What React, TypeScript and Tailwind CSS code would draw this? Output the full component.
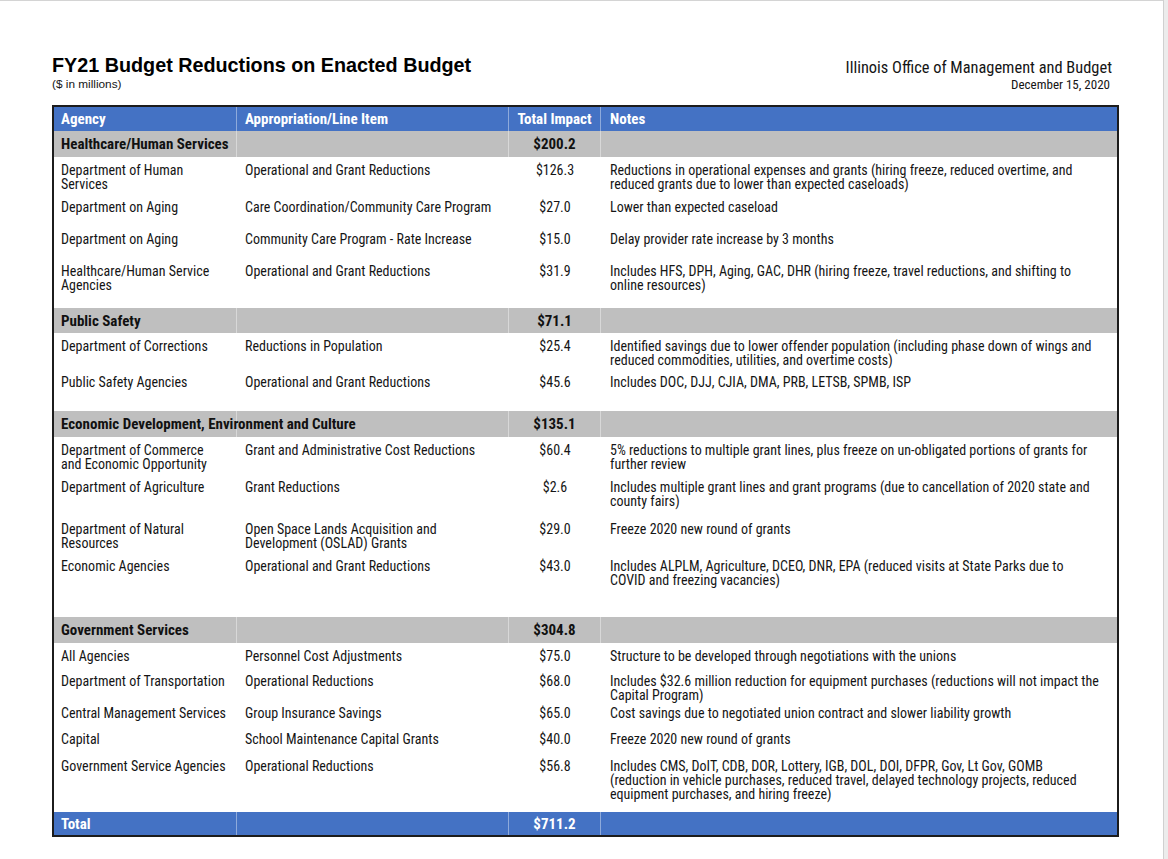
import React from "react";

type Row = {
    agency: string[];
    item: string[];
    amount: string;
    notes: string[];
    h: number;
};

type Group = {
    name: string;
    total: string;
    h: number;
    rows: Row[];
};

const groups: Group[] = [
    {
        name: "Healthcare/Human Services",
        total: "$200.2",
        h: 26,
        rows: [
            {
                agency: ["Department of Human", "Services"],
                item: ["Operational and Grant Reductions"],
                amount: "$126.3",
                notes: [
                    "Reductions in operational expenses and grants (hiring freeze, reduced overtime, and",
                    "reduced grants due to lower than expected caseloads)",
                ],
                h: 37,
            },
            {
                agency: ["Department on Aging"],
                item: ["Care Coordination/Community Care Program"],
                amount: "$27.0",
                notes: ["Lower than expected caseload"],
                h: 32,
            },
            {
                agency: ["Department on Aging"],
                item: ["Community Care Program - Rate Increase"],
                amount: "$15.0",
                notes: ["Delay provider rate increase by 3 months"],
                h: 32,
            },
            {
                agency: ["Healthcare/Human Service", "Agencies"],
                item: ["Operational and Grant Reductions"],
                amount: "$31.9",
                notes: [
                    "Includes HFS, DPH, Aging, GAC, DHR (hiring freeze, travel reductions, and shifting to",
                    "online resources)",
                ],
                h: 50,
            },
        ],
    },
    {
        name: "Public Safety",
        total: "$71.1",
        h: 25,
        rows: [
            {
                agency: ["Department of Corrections"],
                item: ["Reductions in Population"],
                amount: "$25.4",
                notes: [
                    "Identified savings due to lower offender population (including phase down of wings and",
                    "reduced commodities, utilities, and overtime costs)",
                ],
                h: 36,
            },
            {
                agency: ["Public Safety Agencies"],
                item: ["Operational and Grant Reductions"],
                amount: "$45.6",
                notes: ["Includes DOC, DJJ, CJIA, DMA, PRB, LETSB, SPMB, ISP"],
                h: 42,
            },
        ],
    },
    {
        name: "Economic Development, Environment and Culture",
        total: "$135.1",
        h: 26,
        rows: [
            {
                agency: ["Department of Commerce", "and Economic Opportunity"],
                item: ["Grant and Administrative Cost Reductions"],
                amount: "$60.4",
                notes: [
                    "5% reductions to multiple grant lines, plus freeze on un-obligated portions of grants for",
                    "further review",
                ],
                h: 37,
            },
            {
                agency: ["Department of Agriculture"],
                item: ["Grant Reductions"],
                amount: "$2.6",
                notes: [
                    "Includes multiple grant lines and grant programs (due to cancellation of 2020 state and",
                    "county fairs)",
                ],
                h: 42,
            },
            {
                agency: ["Department of Natural", "Resources"],
                item: ["Open Space Lands Acquisition and", "Development (OSLAD) Grants"],
                amount: "$29.0",
                notes: ["Freeze 2020 new round of grants"],
                h: 37,
            },
            {
                agency: ["Economic Agencies"],
                item: ["Operational and Grant Reductions"],
                amount: "$43.0",
                notes: [
                    "Includes ALPLM, Agriculture, DCEO, DNR, EPA (reduced visits at State Parks due to",
                    "COVID and freezing vacancies)",
                ],
                h: 64,
            },
        ],
    },
    {
        name: "Government Services",
        total: "$304.8",
        h: 26,
        rows: [
            {
                agency: ["All Agencies"],
                item: ["Personnel Cost Adjustments"],
                amount: "$75.0",
                notes: ["Structure to be developed through negotiations with the unions"],
                h: 25,
            },
            {
                agency: ["Department of Transportation"],
                item: ["Operational Reductions"],
                amount: "$68.0",
                notes: [
                    "Includes $32.6 million reduction for equipment purchases (reductions will not impact the",
                    "Capital Program)",
                ],
                h: 32,
            },
            {
                agency: ["Central Management Services"],
                item: ["Group Insurance Savings"],
                amount: "$65.0",
                notes: ["Cost savings due to negotiated union contract and slower liability growth"],
                h: 26,
            },
            {
                agency: ["Capital"],
                item: ["School Maintenance Capital Grants"],
                amount: "$40.0",
                notes: ["Freeze 2020 new round of grants"],
                h: 27,
            },
            {
                agency: ["Government Service Agencies"],
                item: ["Operational Reductions"],
                amount: "$56.8",
                notes: [
                    "Includes CMS, DoIT, CDB, DOR, Lottery, IGB, DOL, DOI, DFPR, Gov, Lt Gov, GOMB",
                    "(reduction in vehicle purchases, reduced travel, delayed technology projects, reduced",
                    "equipment purchases, and hiring freeze)",
                ],
                h: 59,
            },
        ],
    },
];

const cols = "grid grid-cols-[183px_272px_92px_1fr]";
const narrow = "font-['Liberation_Sans_Narrow','Roboto_Condensed',Roboto,sans-serif]";

function Lines({ lines }: { lines: string[] }) {
    return (
        <>
            {lines.map((l) => (
                <div key={l} className="whitespace-nowrap">
                    {l}
                </div>
            ))}
        </>
    );
}

function BandRow({
    cells,
    bg,
    text,
    h,
}: {
    cells: string[];
    bg: string;
    text: string;
    h: number;
}) {
    return (
        <div className={`${cols} ${bg} ${text} font-bold text-[15px] leading-[16px]`} style={{ height: h }}>
            <div className="flex items-center pl-[7px] border-r border-white/40 whitespace-nowrap">{cells[0]}</div>
            <div className="flex items-center pl-2 border-r border-white/40">{cells[1]}</div>
            <div className="flex items-center justify-center border-r border-white/40">{cells[2]}</div>
            <div className="flex items-center pl-[9px]">{cells[3]}</div>
        </div>
    );
}

export default function App() {
    return (
        <div className="flex w-[1168px] h-[859px] bg-white overflow-hidden">
            <div className="w-[1163px] border-t border-[#d4d4d4]">
                <div className={`ml-[52px] w-[1067px] text-[#151515] ${narrow}`}>
                    {/* Title block */}
                    <div className="flex justify-between items-start pt-[52px]">
                        <div>
                            <h1 className="font-['Liberation_Sans',Arial,sans-serif] font-bold text-[19.75px] leading-[24px] text-black">
                                FY21 Budget Reductions on Enacted Budget
                            </h1>
                            <div className="font-['Liberation_Sans',Arial,sans-serif] text-[11.8px] leading-[14px]">
                                ($ in millions)
                            </div>
                        </div>
                        <div className="text-right pr-[7px] pt-[6px]">
                            <div className="text-[16.4px] leading-[18px]">Illinois Office of Management and Budget</div>
                            <div className="text-[13px] leading-[15px] pr-[2px]">December 15, 2020</div>
                        </div>
                    </div>

                    {/* Table */}
                    <div className="mt-[13px] border-2 border-[#1c1c1c]">
                        <BandRow
                            cells={["Agency", "Appropriation/Line Item", "Total Impact", "Notes"]}
                            bg="bg-[#4472c4]"
                            text="text-white"
                            h={24}
                        />
                        {groups.map((g) => (
                            <div key={g.name}>
                                <BandRow cells={[g.name, "", g.total, ""]} bg="bg-[#bfbfbf]" text="text-[#111]" h={g.h} />
                                {g.rows.map((r, i) => (
                                    <div
                                        key={i}
                                        className={`${cols} text-[14px] leading-[14px] pt-[6px]`}
                                        style={{ height: r.h }}
                                    >
                                        <div className="pl-[7px]">
                                            <Lines lines={r.agency} />
                                        </div>
                                        <div className="pl-2">
                                            <Lines lines={r.item} />
                                        </div>
                                        <div className="text-center">{r.amount}</div>
                                        <div className="pl-[9px]">
                                            <Lines lines={r.notes} />
                                        </div>
                                    </div>
                                ))}
                            </div>
                        ))}
                        <BandRow cells={["Total", "", "$711.2", ""]} bg="bg-[#4472c4]" text="text-white" h={23} />
                    </div>
                </div>
            </div>
            <div className="w-[5px] h-full bg-[#ececec] border-l border-[#d0d0d0]" />
        </div>
    );
}
